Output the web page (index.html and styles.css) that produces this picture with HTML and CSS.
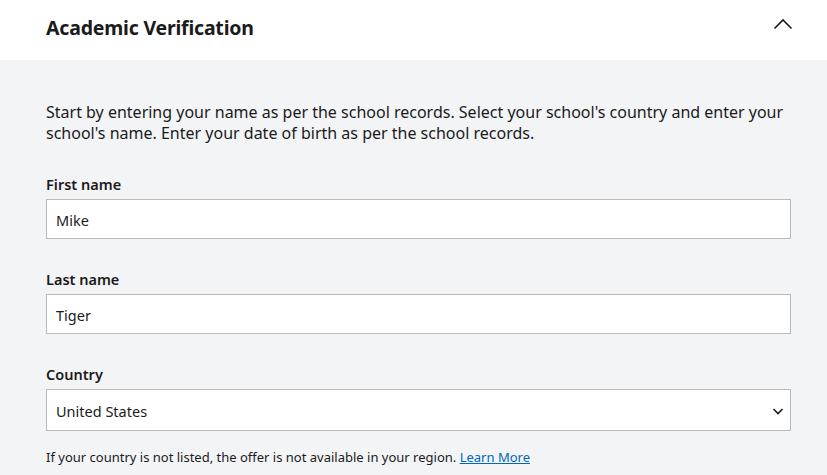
FILE: index.html
```html
<!DOCTYPE html>
<html lang="en">
<head>
<meta charset="utf-8">
<title>Academic Verification</title>
<link rel="stylesheet" href="styles.css">
</head>
<body>
<section class="panel">
  <header class="panel-header">
    <h2 class="panel-title">Academic Verification</h2>
    <button class="collapse-btn" aria-label="Collapse">
      <svg width="20" height="12" viewBox="0 0 20 12"><path d="M1.5 10.5 L10 2 L18.5 10.5" fill="none" stroke="#1b1b1b" stroke-width="1.6"/></svg>
    </button>
  </header>
  <div class="panel-body">
    <p class="intro">Start by entering your name as per the school records. Select your school's country and enter your school's name. Enter your date of birth as per the school records.</p>
    <div class="field">
      <label class="field-label" for="fn">First name</label>
      <input class="text-input" id="fn" type="text" value="Mike">
    </div>
    <div class="field">
      <label class="field-label" for="ln">Last name</label>
      <input class="text-input" id="ln" type="text" value="Tiger">
    </div>
    <div class="field">
      <label class="field-label" for="country">Country</label>
      <div class="select-box">
        <span class="select-value">United States</span>
        <svg class="select-chevron" width="12" height="8" viewBox="0 0 12 8"><path d="M1.5 2 L6 6.5 L10.5 2" fill="none" stroke="#1b1b1b" stroke-width="1.6"/></svg>
      </div>
      <p class="hint">If your country is not listed, the offer is not available in your region. <a href="#" class="link">Learn More</a></p>
    </div>
  </div>
</section>
</body>
</html>
```
FILE: styles.css
```css
* { box-sizing: border-box; }
html, body { margin: 0; padding: 0; }
body {
  font-family: "Noto Sans", "Open Sans", sans-serif;
  color: #1b1b1b;
  background: #f3f4f6;
  width: 827px;
  height: 475px;
  overflow: hidden;
}
.panel-header {
  background: #ffffff;
  height: 60px;
  display: flex;
  align-items: center;
  justify-content: space-between;
  padding: 0 34px 0 46px;
}
.panel-title {
  margin: 0;
  font-size: 19.5px;
  font-weight: 700;
  letter-spacing: -0.2px;
  position: relative;
  top: -3px;
}
.collapse-btn {
  background: none;
  border: 0;
  padding: 0;
  display: flex;
  position: relative;
  top: -6px;
}
.panel-body {
  padding: 42px 36px 0 46px;
}
.intro {
  margin: 0 0 30px;
  font-size: 16px;
  line-height: 21px;
}
.field { display: flex; flex-direction: column; margin-bottom: 30px; }
.field-label {
  font-size: 14.5px;
  font-weight: 600;
  line-height: 20px;
  margin-bottom: 5px;
}
.text-input {
  height: 40px;
  border: 1px solid #bababa;
  background: #fff;
  padding: 2px 9px 0;
  font-family: inherit;
  font-size: 14.5px;
  color: #1b1b1b;
  outline: none;
}
.select-box {
  height: 42px;
  border: 1px solid #bababa;
  background: #fff;
  padding: 2px 6px 0 9px;
  display: flex;
  align-items: center;
  justify-content: space-between;
  font-size: 14.5px;
}
.hint {
  margin: 17px 0 0;
  font-size: 13px;
  line-height: 18px;
}
.link { color: #0067b8; text-decoration: underline; }
```
